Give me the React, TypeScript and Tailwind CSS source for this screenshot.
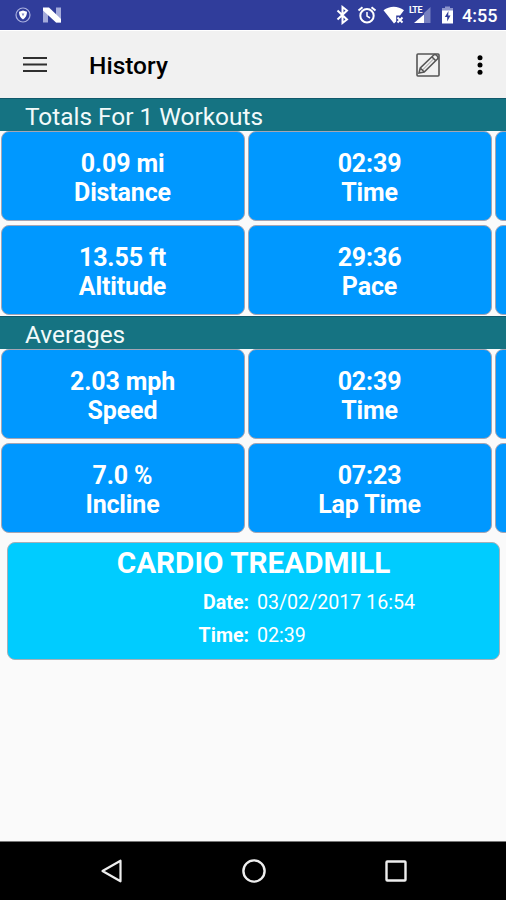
interface Stat {
  value: string;
  label: string;
}

const totals: Stat[][] = [
  [
    { value: '0.09 mi', label: 'Distance' },
    { value: '02:39', label: 'Time' },
  ],
  [
    { value: '13.55 ft', label: 'Altitude' },
    { value: '29:36', label: 'Pace' },
  ],
];

const averages: Stat[][] = [
  [
    { value: '2.03 mph', label: 'Speed' },
    { value: '02:39', label: 'Time' },
  ],
  [
    { value: '7.0 %', label: 'Incline' },
    { value: '07:23', label: 'Lap Time' },
  ],
];

const StatusBar = () => (
  <div className="flex h-[30px] shrink-0 items-center bg-[#303d9b] text-white">
    <svg className="ml-[14px] h-[18px] w-[18px]" viewBox="0 0 18 18">
      <circle cx="9" cy="9" r="7" fill="none" stroke="#aab0e0" strokeWidth="1.2" />
      <path d="M5 5.8 9 4.6l4 1.2c0 3.4-1.2 5.8-4 7.6-2.8-1.8-4-4.2-4-7.6Z" fill="#fff" />
      <path d="M7.6 7.5h2.8L9 10.3Z" fill="#7d86c8" />
    </svg>
    <svg className="ml-[10px] h-4 w-5" viewBox="0 0 20 16">
      <path d="M1 1v14.5h5V1Z" fill="#a3aada" />
      <path d="M14 .5h5v15h-5Z" fill="#a3aada" />
      <path d="M1 .5h6L19 12v3.5h-5L1 3.5Z" fill="#fff" />
    </svg>

    <svg className="ml-[274px] h-5 w-[14px]" viewBox="0 0 14 20">
      <path d="m1.5 5.5 9.5 9L6.5 18V2L11 5.5l-9.5 9" fill="none" stroke="#fff" strokeWidth="2" />
    </svg>
    <svg className="ml-[7px] h-5 w-5" viewBox="0 0 20 20">
      <circle cx="10" cy="10.8" r="6.7" fill="none" stroke="#fff" strokeWidth="2" />
      <path d="m1.5 5.5 4-3.3m13 3.3-4-3.3" stroke="#fff" strokeWidth="2" />
      <path d="M10 7v4.2l3 1.8" fill="none" stroke="#fff" strokeWidth="1.5" />
    </svg>
    <svg className="ml-[6px] h-[18px] w-[22px]" viewBox="0 0 22 18">
      <path d="M.5 4.2C6.5-.5 15-.5 21 4.2L17 9.5h-3.8v6L11 17.5Z" fill="#fff" />
      <path d="m14.5 11.5 5 5m0-5-5 5" stroke="#fff" strokeWidth="1.9" />
    </svg>
    <div className="relative ml-[4px] h-[18px] w-[22px]">
      <svg className="h-[18px] w-[22px]" viewBox="0 0 22 18">
        <path d="M15 7 21.5 1v16H15Z" fill="#7780c0" />
        <path d="M5 17 15 8.5V17Z" fill="#fff" />
      </svg>
      <span className="absolute -top-px left-0 text-[9px] leading-[10px] font-bold tracking-[-0.5px]">
        LTE
      </span>
    </div>
    <svg className="ml-[10px] h-[18px] w-[13px]" viewBox="0 0 13 18">
      <path d="M4 .5h5V2h3v4H1V2h3Z" fill="#8c94cc" />
      <path d="M1 4.5h11v13H1Z" fill="#fff" />
      <path d="M7.5 5 3.8 11h2.4v4.5l3.3-6H7.2Z" fill="#303d9b" />
    </svg>
    <span className="ml-[8px] pt-[2px] text-[18px] leading-[22px] font-medium whitespace-nowrap">4:55</span>
  </div>
);

const Toolbar = () => (
  <header className="flex h-[68px] shrink-0 items-center border-t border-white bg-[#f1f1f1] text-black">
    <svg className="ml-[23px] h-[18px] w-6" viewBox="0 0 24 18">
      <path d="M0 2h24M0 8.5h24M0 15h24" stroke="#2f2f2f" strokeWidth="2.2" />
    </svg>
    <h1 className="ml-[42px] flex-1 pt-[2px] text-[24.5px] leading-7 font-medium">History</h1>
    <svg className="h-[26px] w-[26px]" viewBox="0 0 26 26" fill="none" stroke="#555">
      <rect x="2" y="2" width="22" height="22" rx="1" strokeWidth="1.6" />
      <path
        d="m4 21 1.3-5L18.5 3.2c.9-.9 2-.8 2.9 0l1 1c.8.8.8 1.9 0 2.8L9.2 20ZM5.3 16l3.9 4M16.8 4.8l4 4"
        strokeWidth="1.6"
      />
      <path d="M7.5 18 18.5 7" strokeWidth=".6" />
    </svg>
    <svg className="mr-[23px] ml-[36px] h-5 w-[6px]" viewBox="0 0 6 20">
      <circle cx="3" cy="2.7" r="2.5" />
      <circle cx="3" cy="10" r="2.5" />
      <circle cx="3" cy="17.3" r="2.5" />
    </svg>
  </header>
);

const SectionTitle = ({ title }: { title: string }) => (
  <h2 className="h-[33px] shrink-0 border-t border-[#10596b] bg-[#157382] pt-[2px] pl-[25px] text-[24.4px] leading-[31px] text-[#f2fafa]">
    {title}
  </h2>
);

const tile = 'h-[90px] shrink-0 rounded-[8px] border border-[#a5a5b4] bg-[#0098ff]';

const StatGrid = ({ rows }: { rows: Stat[][] }) => (
  <div className="flex shrink-0 flex-col gap-[4px]">
    {rows.map((row, i) => (
      <div key={i} className="flex gap-[3px] overflow-hidden pl-px">
        {row.map((stat) => (
          <div
            key={stat.label}
            className={`${tile} flex w-[244px] flex-col items-center justify-center pt-[3px] pr-px text-[25px] leading-[29px] font-bold tracking-[-0.15px] text-white`}
          >
            <span>{stat.value}</span>
            <span>{stat.label}</span>
          </div>
        ))}
        {/* next column, scrolled off to the right */}
        <div className={`${tile} w-[244px]`} />
      </div>
    ))}
  </div>
);

const WorkoutCard = () => (
  <div className="mt-[9px] mr-[6px] ml-[7px] h-[118px] shrink-0 rounded-[8px] border border-[#a5b0b8] bg-[#00ccff] text-white">
    <h3 className="pt-[3px] text-center text-[29.7px] leading-[34px] font-bold">CARDIO TREADMILL</h3>
    <dl className="grid grid-cols-[241px_1fr] gap-x-[8px] pt-[6px] text-[19.6px] leading-[33px]">
      <dt className="text-right font-bold">Date:</dt>
      <dd>03/02/2017 16:54</dd>
      <dt className="text-right font-bold">Time:</dt>
      <dd>02:39</dd>
    </dl>
  </div>
);

const NavBar = () => (
  <nav className="mt-auto flex h-[59px] shrink-0 items-center border-t border-[#777] bg-black">
    <svg className="ml-[100px] h-6 w-6" viewBox="0 0 24 24" fill="none" stroke="#eee">
      <path d="M20.5 1.7v20.6L2.5 12Z" strokeWidth="2.2" strokeLinejoin="round" />
    </svg>
    <svg className="ml-[118px] h-6 w-6" viewBox="0 0 24 24" fill="none" stroke="#eee">
      <circle cx="12" cy="12" r="10.6" strokeWidth="2.4" />
    </svg>
    <svg className="ml-[118px] h-6 w-6" viewBox="0 0 24 24" fill="none" stroke="#eee">
      <rect x="2.5" y="2.5" width="19" height="19" rx=".8" strokeWidth="2.4" />
    </svg>
  </nav>
);

const App = () => {
  return (
    <div className="flex h-[900px] w-[506px] flex-col overflow-hidden bg-[#fafafa] font-[Roboto,sans-serif]">
      <StatusBar />
      <Toolbar />
      <SectionTitle title="Totals For 1 Workouts" />
      <StatGrid rows={totals} />
      <div className="mt-px shrink-0">
        <SectionTitle title="Averages" />
      </div>
      <StatGrid rows={averages} />
      <WorkoutCard />
      <NavBar />
    </div>
  );
};

export default App;
